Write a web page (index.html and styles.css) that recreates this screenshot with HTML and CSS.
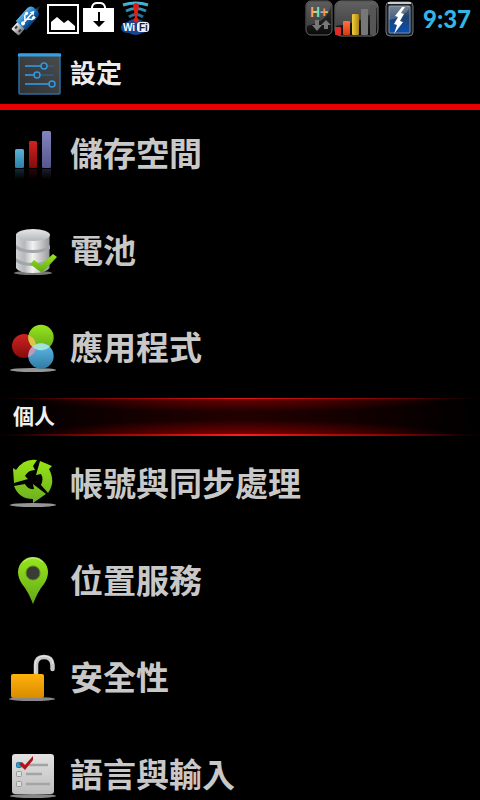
FILE: index.html
```html
<!DOCTYPE html>
<html lang="zh-Hant">
<head>
<meta charset="utf-8">
<meta name="viewport" content="width=device-width, initial-scale=1">
<title>設定</title>
<link rel="stylesheet" href="styles.css">
</head>
<body>
<div class="screen">
  <div class="status">
    <svg class="status-left" width="160" height="38" viewBox="0 0 160 38" aria-hidden="true">
      <defs>
        <linearGradient id="usb" x1="0" y1="0" x2="1" y2="0"><stop offset="0" stop-color="#5db4ec"/><stop offset=".5" stop-color="#1c74c8"/><stop offset="1" stop-color="#083568"/></linearGradient>
        <linearGradient id="wave" gradientUnits="userSpaceOnUse" x1="0" y1="2" x2="0" y2="20"><stop offset="0" stop-color="#4fb8dc"/><stop offset="1" stop-color="#135d8c"/></linearGradient>
        <linearGradient id="metal"><stop offset="0" stop-color="#eee"/><stop offset="1" stop-color="#777"/></linearGradient>
      </defs>
      <g transform="translate(27 19) rotate(42)">
        <path d="M-1-12l2-6 2 6z" fill="#333"/>
        <rect x="-5" y="8" width="10" height="10" rx="1" fill="url(#metal)"/>
        <path d="M-2.500 12v3M2.500 12v3" stroke="#333" stroke-width="2"/>
        <path d="M-7 9v-17q0-4 4-5h6q4 1 4 5v17z" fill="url(#usb)"/>
        <path d="M0 6v-13M0 3l-4-4v-3M0 0l4-3v-2" fill="none" stroke="#fff" stroke-width="1.600"/>
        <path d="M-2.500-7L0-11l2.500 4z" fill="#fff"/><circle cy="6" r="2" fill="#fff"/><circle cx="-4" cy="-4" r="1.500" fill="#fff"/><path d="M2.500-7h3v3h-3z" fill="#fff"/>
      </g>
      <rect x="48" y="5" width="30" height="28" fill="#000" stroke="#fff" stroke-width="2"/>
      <path d="M51 30v-8l6-5 7 6 4-3 7 6v4z" fill="#fff"/>
      <path d="M83 8h31v24H83z" fill="#fff"/>
      <path d="M92 9V7q1-4 5-4h3q4 0 5 4v2" fill="none" stroke="#fff" stroke-width="2"/>
      <path d="M98 12h2v9h5l-6 6-6-6h5z" fill="#000"/>
      <path d="M121 28q0-5 6-6 8-6 16-1 8 1 7 6-1 5-8 6-6 4-13 0-8 0-8-5z" fill="#16468f"/>
      <g fill="none" stroke="url(#wave)" stroke-width="3"><path d="M123 5q13-4 25 0M126 11q10-5 20 0M129 17q7-5 14 0"/></g>
      <path d="M133 5q3-4 6 0l-2 13h-2z" fill="#e11c12"/><circle cx="136" cy="20" r="2.500" fill="#e11c12"/>
      <rect x="137" y="22" width="12" height="10" rx="3" fill="#edf1f5"/>
      <text x="123" y="31" class="wifi" fill="#fff">Wi</text><text x="139" y="31" class="wifi" fill="#123">Fi</text>
    </svg>
    <div class="status-right">
      <svg width="112" height="38" viewBox="304 0 112 38" aria-hidden="true">
        <defs>
          <linearGradient id="glass" x1="0" y1="0" x2="1" y2="1"><stop offset="0" stop-color="#8a8a8a"/><stop offset=".48" stop-color="#333"/><stop offset=".5" stop-color="#080808"/><stop offset="1" stop-color="#1c1c1c"/></linearGradient>
          <linearGradient id="shine" x1="0" y1="1" x2="0" y2="0"><stop offset="0" stop-color="#0a0a0a"/><stop offset="1" stop-color="#3a3a3a"/></linearGradient>
          <linearGradient id="rainbow"><stop offset="0" stop-color="#f66"/><stop offset=".25" stop-color="#ffd84a"/><stop offset=".45" stop-color="#6fe5bc"/><stop offset=".6" stop-color="#5bb8ff"/><stop offset=".75" stop-color="#ff8a4a"/><stop offset="1" stop-color="#c8f04a"/></linearGradient>
          <linearGradient id="bat" x1="0" y1="0" x2="0" y2="1"><stop offset="0" stop-color="#59636e"/><stop offset=".4" stop-color="#1e416e"/><stop offset="1" stop-color="#0850b4"/></linearGradient>
          <linearGradient id="orange" x1="0" y1="0" x2="0" y2="1"><stop offset="0" stop-color="#ff7040"/><stop offset="1" stop-color="#d83a10"/></linearGradient>
          <linearGradient id="yellow"><stop offset="0" stop-color="#f5cf3f"/><stop offset="1" stop-color="#aa8610"/></linearGradient>
        </defs>
        <rect x="307" y="1" width="26" height="34" rx="5" fill="url(#shine)" stroke="#666"/>
        <path d="M308 6q0-4 4-4h16q4 0 4 4-4 16-24 20z" fill="#fff" opacity=".18"/>
        <text x="311" y="17" class="hplus" fill="url(#rainbow)">H+</text>
        <path d="M316 20h4v5h3l-5 6-5-6h3zM325 29v-4h-3l5-5 5 5h-3v4z" fill="#777"/>
        <rect x="336" y="1" width="43" height="35" rx="6" fill="url(#shine)" stroke="#777"/>
        <path d="M337 7q0-5 5-5h31q5 0 5 5-10 15-41 19z" fill="#fff" opacity=".2"/>
        <rect x="336" y="27" width="6" height="8" rx="1" fill="#e12a2a"/>
        <rect x="344" y="21" width="7" height="14" rx="1" fill="url(#orange)"/>
        <rect x="353" y="14" width="7" height="21" rx="1" fill="url(#yellow)"/>
        <rect x="362" y="9" width="7" height="26" rx="1" fill="#777"/>
        <rect x="371" y="5" width="6" height="30" rx="1" fill="#555"/>
        <rect x="387" y="2" width="27" height="34" rx="4" fill="#1a2028" stroke="#777"/>
        <path d="M389 3h23" stroke="#ccc" stroke-width="2"/>
        <rect x="390" y="6" width="21" height="27" rx="1" fill="url(#bat)" stroke="#7f8fa2"/>
        <path d="M390 6h21q-3 10-21 14z" fill="#fff" opacity=".2"/>
        <path d="M403 7l-7 9 3 1-4 7 3 1-3 9 9-12-3-1 4-7-3-1 4-6z" fill="#fff"/>
      </svg>
      <time class="clock">9:37</time>
    </div>
  </div>

  <header class="appbar">
    <svg width="44" height="42" viewBox="0 0 44 42" aria-hidden="true">
      <defs><linearGradient id="panel" x1="1" y1="0" x2="0" y2="1"><stop offset="0" stop-color="#4b4b4b"/><stop offset="1" stop-color="#303234"/></linearGradient></defs>
      <rect x="1" y="1" width="41" height="40" rx="1" fill="url(#panel)" stroke="#2c6d9c" stroke-width="1.500"/>
      <path d="M0 2h43" stroke="#31a1e4" stroke-width="3"/>
      <path d="M7 13h29M7 22h29M7 31h29" stroke="#285f8c" stroke-width="1.500"/>
      <path d="M7 13h17M7 22h10M7 31h25" stroke="#3498db" stroke-width="1.500"/>
      <g fill="#34414c" stroke="#3498db" stroke-width="1.500"><circle cx="26" cy="13" r="3"/><circle cx="19" cy="22" r="3"/><circle cx="34" cy="31" r="3"/></g>
    </svg>
    <h1>設定</h1>
  </header>

  <main class="list">
    <a class="row" href="#storage">
      <svg class="icon" viewBox="0 0 70 71" aria-hidden="true">
        <defs>
          <linearGradient id="b1" x1="0" y1="0" x2="0" y2="1"><stop offset="0" stop-color="#5bb1d9"/><stop offset="1" stop-color="#2c7fa4"/></linearGradient>
          <linearGradient id="b2" x1="0" y1="0" x2="0" y2="1"><stop offset="0" stop-color="#d02222"/><stop offset="1" stop-color="#850b0b"/></linearGradient>
          <linearGradient id="b3" x1="0" y1="0" x2="0" y2="1"><stop offset="0" stop-color="#8585bd"/><stop offset="1" stop-color="#565690"/></linearGradient>
          <linearGradient id="fade" x1="0" y1="0" x2="0" y2="1"><stop offset="0" stop-color="#000" stop-opacity=".65"/><stop offset="1" stop-color="#000"/></linearGradient>
        </defs>
        <rect x="15" y="31" width="9" height="19" rx="1.500" fill="url(#b1)"/><rect x="29" y="23" width="8" height="27" rx="1.500" fill="url(#b2)"/><rect x="42" y="13" width="9" height="37" rx="1.500" fill="url(#b3)"/>
        <path d="M15 51h9v10h-9z" fill="#2c7fa4"/><path d="M29 51h8v10h-8z" fill="#850b0b"/><path d="M42 51h9v10h-9z" fill="#565690"/><path d="M14 50.500h38v11H14z" fill="url(#fade)"/>
      </svg>
      <span>儲存空間</span>
    </a>
    <a class="row" href="#battery">
      <svg class="icon" viewBox="0 0 70 71" aria-hidden="true">
        <defs>
          <linearGradient id="cyl"><stop offset="0" stop-color="#d2d2d4"/><stop offset=".25" stop-color="#b6b8ba"/><stop offset=".5" stop-color="#f2f2f2"/><stop offset="1" stop-color="#98999b"/></linearGradient>
          <linearGradient id="cyltop" x1="0" y1="0" x2="0" y2="1"><stop offset="0" stop-color="#e6e7e8"/><stop offset="1" stop-color="#b4b8bc"/></linearGradient>
          <linearGradient id="green" x1="0" y1="0" x2="0" y2="1"><stop offset="0" stop-color="#98e61c"/><stop offset="1" stop-color="#62a719"/></linearGradient>
        </defs>
        <ellipse cx="33" cy="58" rx="19" ry="2" fill="#777"/>
        <path d="M16 19h33.500v34q-3 5-17 5t-16.500-5z" fill="url(#cyl)"/>
        <path d="M16 30q6 5 17 5t17-5v4q-6 4-17 4t-17-4zM16 43q6 5 17 5t17-5v4q-6 4-17 4t-17-4z" fill="#a0a6aa"/>
        <ellipse cx="33" cy="20" rx="17" ry="6" fill="url(#cyltop)"/>
        <path d="M30 49l4-4 7 5 12-11 4 3-15 16z" fill="url(#green)"/>
      </svg>
      <span>電池</span>
    </a>
    <a class="row" href="#apps">
      <svg class="icon" viewBox="0 0 70 71" aria-hidden="true">
        <defs>
          <linearGradient id="bl" x1="0" y1="0" x2="0" y2="1"><stop offset="0" stop-color="#60bde6"/><stop offset="1" stop-color="#2e7ba5"/></linearGradient>
          <clipPath id="cg"><circle cx="41" cy="25.500" r="12.700"/></clipPath><clipPath id="cr"><circle cx="24" cy="34" r="12"/></clipPath>
        </defs>
        <ellipse cx="33" cy="58" rx="23" ry="2" fill="#969696"/>
        <circle cx="24" cy="34" r="12" fill="url(#b2)"/><circle cx="41" cy="25.500" r="12.700" fill="url(#green)"/><circle cx="41" cy="44" r="12.700" fill="url(#bl)"/>
        <circle cx="24" cy="34" r="12" fill="#dec34a" clip-path="url(#cg)"/>
        <circle cx="41" cy="44" r="12.700" fill="#c398bd" clip-path="url(#cr)"/>
        <circle cx="41" cy="44" r="12.700" fill="#a2e2d7" clip-path="url(#cg)"/>
      </svg>
      <span>應用程式</span>
    </a>

    <h2 class="section"><span>個人</span></h2>

    <a class="row" href="#sync">
      <svg class="icon" viewBox="0 0 70 71" aria-hidden="true">
        <defs><linearGradient id="cycle" gradientUnits="userSpaceOnUse" x1="0" y1="12" x2="0" y2="55"><stop offset="0" stop-color="#96e414"/><stop offset="1" stop-color="#6cae22"/></linearGradient></defs>
        <ellipse cx="33" cy="57" rx="23" ry="2" fill="#969696"/>
        <g fill="url(#cycle)">
          <path d="M37 12Q24 10 16 22l-3-2 1 15 14-4-3-3q3-6 10-6l-2-4z"/>
          <path d="M40 13l12 5-3 3q7 13-1 24l-7-8q3-6 0-11l-5 1z"/>
          <path d="M14 38l11-2q3 6 9 5l-1-5 13 10-13 9v-4Q19 51 14 38z"/>
        </g>
      </svg>
      <span>帳號與同步處理</span>
    </a>
    <a class="row" href="#location">
      <svg class="icon" viewBox="0 0 70 71" aria-hidden="true">
        <path d="M33 59Q28 46 22 39 18 33 18 27a15 15 0 0 1 30 0q0 6-4 12-6 7-11 20z" fill="url(#green)"/>
        <path d="M23 17q10-8 20 0" fill="none" stroke="#c1ef7c" stroke-width="1"/>
        <circle cx="33" cy="28" r="7" fill="#393b35" stroke="#598a1e"/>
      </svg>
      <span>位置服務</span>
    </a>
    <a class="row" href="#security">
      <svg class="icon" viewBox="0 0 70 71" aria-hidden="true">
        <defs><linearGradient id="gold" x1="0" y1="0" x2="0" y2="1"><stop offset="0" stop-color="#ffb20b"/><stop offset="1" stop-color="#d98b00"/></linearGradient></defs>
        <ellipse cx="32" cy="57" rx="23" ry="2" fill="#888"/>
        <path d="M36 33V23q0-8 8-8t8.500 8v4" fill="none" stroke="#c8c8c8" stroke-width="4.500" stroke-linecap="round"/>
        <path d="M35 31V23q1-9 9-9t9 8" fill="none" stroke="#eee" stroke-width="1"/>
        <rect x="11" y="32" width="33" height="24" rx="2" fill="url(#gold)"/>
      </svg>
      <span>安全性</span>
    </a>
    <a class="row" href="#language">
      <svg class="icon" viewBox="0 0 70 71" aria-hidden="true">
        <defs><linearGradient id="paper" x1="0" y1="0" x2="0" y2="1"><stop offset="0" stop-color="#e2e2e2"/><stop offset="1" stop-color="#bebebe"/></linearGradient></defs>
        <ellipse cx="33" cy="57" rx="23" ry="2" fill="#888"/>
        <rect x="12" y="15" width="42" height="40" rx="3" fill="url(#paper)"/>
        <path d="M28 26h20M26 35h16M26 45h24" stroke="#a4a4a4" stroke-width="2.500"/>
        <rect x="16.500" y="23.500" width="5" height="5" rx="1" fill="#369ac5" stroke="#27799d"/>
        <g fill="#ddd" stroke="#999"><rect x="16.500" y="32.500" width="5" height="5" rx="1"/><rect x="16.500" y="42.500" width="5" height="5" rx="1"/></g>
        <path d="M19 25l3-2 3 3 8-9v4l-8 10z" fill="#b51218"/>
      </svg>
      <span>語言與輸入</span>
    </a>
  </main>
</div>
</body>
</html>
```
FILE: styles.css
```css
* {
  box-sizing: border-box;
}

body {
  margin: 0;
  background: #000;
  font-family: "Noto Sans CJK TC", sans-serif;
}

.screen {
  height: 100vh;
  display: flex;
  flex-direction: column;
  overflow: hidden;
}

.status {
  flex: none;
  display: flex;
  justify-content: space-between;
  height: 38px;
}

.status-right {
  display: flex;
  align-items: center;
  gap: 8px;
  padding-right: 9px;
}

.clock {
  color: #33b5e5;
  font: 900 24px/38px Lato, sans-serif;
}

.wifi {
  font: 700 10px "Liberation Sans", sans-serif;
}

.hplus {
  font: 700 14px "Liberation Sans", sans-serif;
}

.appbar {
  flex: none;
  display: flex;
  align-items: center;
  gap: 8px;
  height: 72px;
  padding: 6px 0 0 18px;
  border-bottom: 6px solid #e60000;
}

h1 {
  margin: 0;
  padding-bottom: 4px;
  color: #ececec;
  font-size: 26px;
  line-height: 38px;
}

.list {
  flex: 1;
  margin-top: -5px;
}

.row {
  display: flex;
  align-items: center;
  height: 97px;
  color: #c8c8c8;
  font-size: 33px;
  font-weight: 700;
  line-height: 48px;
  text-decoration: none;
}

.row span,
.section span {
  padding-bottom: 4px;
}

.icon {
  flex: none;
  width: 70px;
  height: 71px;
}

.section {
  display: flex;
  align-items: center;
  height: 38px;
  margin: 2px 0 -1px;
  padding-left: 13px;
  color: #f0f0f0;
  font-size: 21px;
  line-height: 30px;
  background:
    linear-gradient(90deg, transparent, #a00808 30%, #e01818 50%, #a00808 70%, transparent) top / 100% 1px no-repeat,
    linear-gradient(90deg, transparent, #b00808 30%, #ff2020 50%, #b00808 70%, transparent) bottom / 100% 2px no-repeat,
    radial-gradient(ellipse 45% 14px at 50% 0, #700000, transparent),
    radial-gradient(ellipse 45% 16px at 50% 100%, #850000, transparent),
    radial-gradient(ellipse 50% 60px at 50% 50%, #240000, transparent);
}
```
